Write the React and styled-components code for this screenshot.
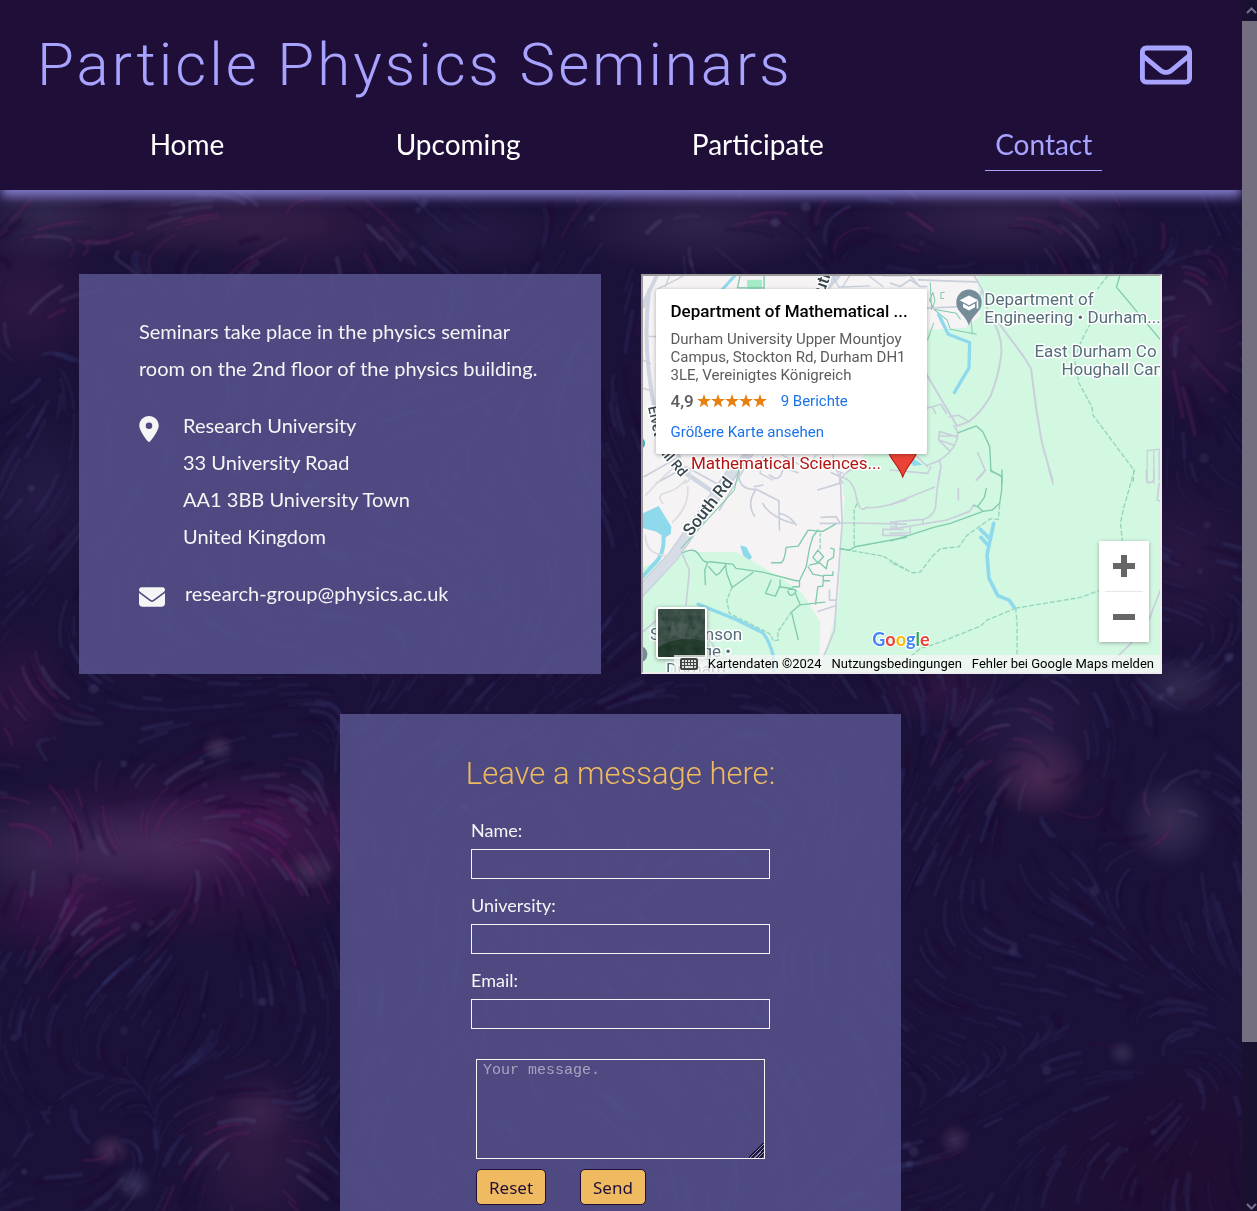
import React from "react";
import styled, { createGlobalStyle } from "styled-components";
import { FaEnvelope, FaLocationDot, FaRegEnvelope, FaKeyboard } from "react-icons/fa6";

const night = "#1f0f38";
const lilac = "#a7a3ff";
const amber = "#f0ba60";
const bodyFont = `Lato, "Open Sans", sans-serif`;
const displayFont = `Roboto, "Open Sans", sans-serif`;

const GlobalStyle = createGlobalStyle`
  *, *::before, *::after { box-sizing: border-box; }
  body { margin: 0; background: #1c1138; color: #f5f5f5; font-family: ${bodyFont}; }
  h1, h2, p, ul { margin: 0; padding: 0; }
`;

const Window = styled.div`
  display: grid;
  grid-template-columns: minmax(0, 1fr) 15px;
  height: 100vh;
  overflow: hidden;
`;

const Page = styled.div`
  position: relative;
  display: flex;
  flex-direction: column;
  min-height: 0;
  overflow: hidden;
`;

const Backdrop = styled.svg`
  position: absolute;
  inset: 0;
  width: 100%;
  height: 100%;
`;

const Header = styled.header`
  position: relative;
  z-index: 1;
  flex: none;
  height: 190px;
  padding-top: 25px;
  background: ${night};
  box-shadow: 0 8px 10px -1px #7f78c6;
`;

const TitleRow = styled.div`
  display: flex;
  align-items: center;
  justify-content: space-between;
  height: 80px;
  padding: 0 50px 0 37px;
`;

const Title = styled.h1`
  font: 300 60px/80px ${displayFont};
  letter-spacing: 3px;
  color: ${lilac};
`;

const MailLink = styled.a`
  display: flex;
  color: ${lilac};
  font-size: 52px;
`;

const NavList = styled.ul`
  display: flex;
  justify-content: space-around;
  padding: 0 64px;
  margin-top: 15px;
  list-style: none;
`;

const NavLink = styled.a`
  display: block;
  padding: 0 10px 2px;
  font-size: 28px;
  line-height: 48px;
  text-decoration: none;
  color: ${(p) => (p.$active ? lilac : "#ffffff")};
  border-bottom: 1px solid ${(p) => (p.$active ? lilac : "transparent")};
`;

const Main = styled.main`
  position: relative;
  flex: 1;
  min-height: 0;
  display: flex;
  flex-direction: column;
  align-items: center;
  gap: 40px;
  padding: 84px 80px 0 79px;
  overflow: auto;
  scrollbar-width: none;
`;

const TopRow = styled.div`
  flex: none;
  width: 100%;
  display: grid;
  grid-template-columns: 1fr 1fr;
  gap: 40px;
`;

const Card = styled.section`
  background: rgba(87, 83, 142, 0.86);
`;

const InfoCard = styled(Card)`
  display: flex;
  flex-direction: column;
  gap: 20px;
  min-height: 400px;
  padding: 39px 50px 40px 60px;
  font-size: 20px;
  line-height: 37px;
`;

const InfoRow = styled.div`
  display: flex;
`;

const RowIcon = styled.span`
  flex: none;
  display: flex;
  justify-content: center;
  width: ${(p) => p.$width}px;
  height: 26px;
  margin-top: 9px;
  margin-right: ${(p) => p.$gap}px;
  svg { flex: none; width: 26px; height: 26px; }
`;

const PlainLink = styled.a`
  color: inherit;
  text-decoration: none;
`;

const Address = styled.address`
  font-style: normal;
`;

/* ---------- map ---------- */

const MapFrame = styled.section`
  position: relative;
  min-height: 400px;
  overflow: hidden;
  border: 2px solid;
  border-color: #9a9a9a #eeeeee #eeeeee #9a9a9a;
  font-family: Roboto, sans-serif;
`;

const MapDrawing = styled.svg`
  position: absolute;
  inset: 0;
  width: 100%;
  height: 100%;
`;

const PlaceCard = styled.div`
  position: absolute;
  left: 13px;
  top: 13px;
  width: 271px;
  height: 165px;
  padding: 12px 10px 12px 15px;
  background: #ffffff;
  border-radius: 2px;
  box-shadow: 0 1px 4px rgba(0, 0, 0, 0.3);
  color: #5b5b5b;
  font-size: 15px;
  line-height: 18px;
  white-space: nowrap;
`;

const PlaceName = styled.h2`
  margin-bottom: 8px;
  font-size: 17px;
  line-height: 21px;
  font-weight: 500;
  color: #000000;
`;

const Rating = styled.div`
  display: flex;
  align-items: center;
  margin: 7px 0 12px;
  line-height: 20px;
`;

const Score = styled.span`
  font-size: 17px;
  font-weight: 500;
  margin-right: 3px;
`;

const Stars = styled.svg`
  width: 70px;
  height: 14px;
  margin-right: 14px;
  fill: #e7800f;
`;

const MapLink = styled.a`
  color: #1a73e8;
  text-decoration: none;
`;

const ZoomBox = styled.div`
  position: absolute;
  right: 11px;
  bottom: 30px;
  display: flex;
  flex-direction: column;
  width: 50px;
  padding: 0 6px;
  background: #ffffff;
  box-shadow: 0 1px 4px rgba(0, 0, 0, 0.3);
`;

const ZoomButton = styled.button`
  display: grid;
  place-items: center;
  height: 50px;
  padding: 0;
  border: 0;
  background: none;
  & + & { height: 51px; border-top: 1px solid #e6e6e6; }
`;

const SatelliteButton = styled.button`
  position: absolute;
  left: 13px;
  bottom: 13px;
  width: 51px;
  height: 52px;
  padding: 0;
  border: 2px solid #ffffff;
  border-radius: 3px;
  overflow: hidden;
  box-shadow: 0 1px 4px rgba(0, 0, 0, 0.4);
  svg { display: block; width: 100%; height: 100%; }
`;

const MapFooter = styled.footer`
  position: absolute;
  right: 0;
  bottom: 0;
  display: flex;
  align-items: center;
  gap: 10px;
  height: 17px;
  padding: 0 6px;
  background: rgba(245, 245, 245, 0.75);
  color: #000000;
  font-size: 13px;
  line-height: 17px;
  white-space: nowrap;
  svg { color: #444444; font-size: 18px; }
`;

const FooterLink = styled.a`
  color: inherit;
  text-decoration: none;
`;

/* ---------- form ---------- */

const FormCard = styled(Card)`
  flex: none;
  display: flex;
  flex-direction: column;
  align-items: center;
  width: 561px;
  max-width: 100%;
  padding: 40px 20px 60px;
`;

const FormTitle = styled.h2`
  margin-bottom: 23px;
  font: 300 31px/40px ${displayFont};
  color: ${amber};
`;

const Form = styled.form`
  display: flex;
  flex-direction: column;
  width: 299px;
`;

const Field = styled.div`
  display: flex;
  flex-direction: column;
  gap: 5px;
  margin-bottom: 13px;
`;

const Label = styled.label`
  font-size: 18px;
  line-height: 27px;
`;

const Input = styled.input`
  height: 30px;
  padding: 0 6px;
  border: 1px solid #f5f5f5;
  background: transparent;
  color: #f5f5f5;
  font: 16px ${bodyFont};
`;

const Message = styled.textarea`
  height: 100px;
  margin: 17px 5px 10px;
  padding: 2px 6px;
  border: 1px solid #f5f5f5;
  border-radius: 0;
  background: transparent;
  color: #f5f5f5;
  font: 15px/18px "Liberation Mono", monospace;
  resize: both;
  &::placeholder { color: #a8a4bf; opacity: 1; }
  &::-webkit-resizer {
    background: linear-gradient(135deg, transparent 44%,
      #1f1838 44%, #1f1838 51%, #8f8bb8 51%, #8f8bb8 56%,
      #1f1838 56%, #1f1838 64%, #8f8bb8 64%, #8f8bb8 70%,
      #1f1838 70%, #1f1838 77%, #8f8bb8 77%, #8f8bb8 83%,
      #1f1838 83%, #1f1838 90%, transparent 90%);
  }
`;

const Actions = styled.div`
  display: flex;
  gap: 34px;
  padding: 0 5px;
`;

const Button = styled.button`
  height: 36px;
  padding: 0 12px;
  border: 1px solid ${night};
  border-radius: 5px;
  background: ${amber};
  color: ${night};
  font: 17px "Noto Sans", sans-serif;
`;

/* ---------- scroll bar ---------- */

const ScrollTrack = styled.div`
  display: flex;
  flex-direction: column;
  background: #1a1030;
  color: #77728a;
  overflow: hidden;
`;

const ScrollArrow = styled.div`
  display: grid;
  place-items: center end;
  flex: none;
  height: ${(p) => p.$size}px;
`;

const ScrollThumb = styled.div`
  flex: 32;
  background: #746f80;
`;

const ScrollRest = styled.div`
  flex: 5;
`;

/* Painted-sky backdrop: soft glows plus brush strokes bending round each star. */
const glows = [
  [190, 850, 170, 75, "#7a2070", 0.4], [40, 850, 90, 50, "#5f4a78", 0.5], [160, 845, 80, 40, "#66527e", 0.5],
  [270, 825, 90, 45, "#702068", 0.35], [60, 915, 80, 35, "#661a62", 0.4], [1040, 775, 40, 36, "#7a4068", 0.7],
  [1030, 730, 60, 60, "#3c2f62", 0.5], [1170, 822, 38, 38, "#5a5074", 0.65], [255, 1150, 60, 75, "#5e3060", 0.45],
  [260, 1110, 30, 26, "#7a4f7a", 0.3], [110, 1150, 16, 14, "#6a456c", 0.7], [134, 1184, 15, 14, "#5c5a86", 0.6],
  [218, 748, 13, 12, "#6c5876", 0.6], [310, 870, 22, 16, "#6f607f", 0.5], [955, 1140, 13, 13, "#664870", 0.6],
  [1122, 1053, 12, 11, "#5c5a7a", 0.5], [190, 222, 120, 30, "#5c3a60", 0.5], [310, 225, 90, 40, "#5c3060", 0.4],
  [45, 215, 60, 40, "#4f4468", 0.6], [700, 225, 110, 38, "#4c3c66", 0.6], [1000, 220, 120, 34, "#4c3862", 0.6],
  [1190, 330, 50, 70, "#5a2b62", 0.4], [25, 300, 60, 60, "#5c2a60", 0.4], [20, 700, 40, 60, "#5c2058", 0.4],
  [1180, 685, 40, 25, "#544a70", 0.6], [940, 690, 50, 30, "#5a2058", 0.4], [1190, 1170, 130, 90, "#2a0526", 0.5],
  [1180, 560, 60, 70, "#4f2b62", 0.35], [40, 500, 50, 70, "#3f3468", 0.4], [470, 235, 80, 30, "#3b2f60", 0.4],
];

const vortices = [
  [170, 860, 1, 170], [1040, 775, -1, 90], [1170, 820, 1, 80], [255, 1150, -1, 90], [110, 1150, 1, 60],
  [40, 850, -1, 90], [300, 230, 1, 90], [700, 230, -1, 120], [1000, 240, 1, 100], [1190, 330, -1, 90],
  [40, 360, 1, 90], [560, 900, -1, 160], [1180, 1080, 1, 100],
];

function makeStrokes() {
  let seed = 71;
  const rand = () => {
    seed = (seed * 16807) % 2147483647;
    return seed / 2147483647;
  };
  const strokes = [];
  for (let i = 0; i < 2600; i++) {
    let x = rand() * 1260 - 10;
    let y = 190 + rand() * 1030;
    const warm = Math.min(1, glows.slice(0, 24).reduce((s, [gx, gy, rx, ry]) => {
      const d = ((x - gx) / rx) ** 2 + ((y - gy) / ry) ** 2;
      return s + Math.exp(-d);
    }, 0));
    const steps = 3 + Math.floor(rand() * 6);
    let d = `M${x.toFixed(1)} ${y.toFixed(1)}`;
    for (let k = 0; k < steps; k++) {
      let vx = Math.sin(y / 53 + x / 120) * 0.45;
      let vy = 0.5 + Math.cos(x / 67 + y / 140) * 0.4;
      for (const [cx, cy, spin, r] of vortices) {
        const dx = x - cx;
        const dy = y - cy;
        const dist = Math.hypot(dx, dy) + 1;
        const w = Math.exp(-(dist * dist) / (r * r)) * 1.6;
        vx += (w * (-dy * spin + dx * 0.9)) / dist;
        vy += (w * (dx * spin * 0.6 + dy * 0.9)) / dist;
      }
      const n = Math.hypot(vx, vy) || 1;
      x += (vx / n) * 6;
      y += (vy / n) * 6;
      d += `L${x.toFixed(1)} ${y.toFixed(1)}`;
    }
    const pink = rand() < warm * 0.6;
    const dark = rand() < 0.25;
    strokes.push({
      d,
      color: dark ? "#180b30" : pink ? "#622060" : warm > 0.4 ? "#544e7c" : "#363a70",
      width: 1.5 + rand() * 3,
      opacity: 0.1 + rand() * 0.24 + warm * 0.1,
    });
  }
  const specks = [];
  for (let i = 0; i < 110; i++) {
    specks.push([rand() * 1242, 200 + rand() * 1010, 2 + rand() * 3, 0.06 + rand() * 0.18]);
  }
  return { strokes, specks };
}

const sky = makeStrokes();

function Sky() {
  return (
    <Backdrop viewBox="0 0 1242 1211" preserveAspectRatio="xMidYMin slice" aria-hidden="true">
      <defs>
        {glows.map(([, , , , fill, o], i) => (
          <radialGradient key={i} id={`glow${i}`}>
            <stop offset="0" stopColor={fill} stopOpacity={o * 0.7} />
            <stop offset="0.5" stopColor={fill} stopOpacity={o * 0.4} />
            <stop offset="1" stopColor={fill} stopOpacity="0" />
          </radialGradient>
        ))}
        <filter id="brush"><feGaussianBlur stdDeviation="1.3" /></filter>
      </defs>
      <rect width="1242" height="1211" fill="#1c1138" />
      {glows.map(([cx, cy, rx, ry], i) => (
        <ellipse key={i} cx={cx} cy={cy} rx={rx * 1.25} ry={ry * 1.25} fill={`url(#glow${i})`} />
      ))}
      <g filter="url(#brush)" fill="none" strokeLinecap="round" strokeLinejoin="round">
        {sky.strokes.map((s, i) => (
          <path key={i} d={s.d} stroke={s.color} strokeWidth={s.width} opacity={s.opacity} />
        ))}
        {sky.specks.map(([cx, cy, r, o], i) => (
          <circle key={i} cx={cx} cy={cy} r={r} fill="#6a6ea6" opacity={o} />
        ))}
      </g>
    </Backdrop>
  );
}

const road = "#cfd6e1";
const lane = "#c9cfdb";
const trail = "#7fcbab";
const water = "#8fd9ed";

function CampusMap() {
  return (
    <MapDrawing viewBox="0 0 517 396" preserveAspectRatio="xMidYMid slice" role="img" aria-label="Map">
      <rect width="517" height="396" fill="#f5f3f4" />
      <g fill="#d3f8e2">
        <path d="M334 0H517V396H178L195 326 198 275 201 225 206 196 222 178 284 178V54L322 52 337 40Z" />
        <path d="M0 291 41 276H93L140 303 160 318 177 346 176 396H0Z" />
        <path d="M200 205 206 192 225 177H285V220H200Z" />
      </g>
      <path d="M104 4h15v9h-15z" fill="#a5ebc7" />

      {/* north-west quarter */}
      <g transform="translate(-7 -6) scale(.33333)" fill="none" strokeLinejoin="round" strokeLinecap="round">
        <path d="M62 18 28 90 22 110M40 60Q24 180 38 300T60 420Q66 500 130 560" stroke={road} strokeWidth="12" />
        <path d="M40 200H62M20 270 44 282M22 355 42 362M100 18 88 50M60 60 140 20" stroke={lane} strokeWidth="4" />
        <path d="M296 18 256 62" stroke={water} strokeWidth="9" />
        <path d="M312 18 304 54H384M384 20V56" stroke={trail} strokeWidth="4" />
        <path d="M600 18 560 62" stroke={road} strokeWidth="24" />
        <path d="M592 22 608 52 700 48M640 18 620 50M700 20 740 50M740 18H810" stroke={lane} strokeWidth="4" />
        <path d="M24 620 130 560M60 640 150 590 240 640M350 552 250 720" stroke={lane} strokeWidth="5" />
        <path d="M330 560 270 640" stroke={road} strokeWidth="26" />
        <path d="M380 560 372 610 410 630M440 556 500 590 560 580 620 610M590 555 600 600 620 640M540 556 520 580M470 556V580" stroke={lane} strokeWidth="4" />
        <circle cx="8" cy="520" r="19" fill="#22b5bd" />
      </g>

      {/* north-east quarter */}
      <g transform="translate(247 -6) scale(.33333)" fill="none" strokeLinejoin="round" strokeLinecap="round">
        <path d="M0 40 30 50 60 30 90 50H110M60 18 86 48M85 30 180 34 260 36M110 115 260 108 276 60 252 18M276 60 300 150" stroke={lane} strokeWidth="5" />
        <path d="M300 140Q340 200 332 260T300 380Q270 430 236 455L200 468 110 315M325 160 400 260 422 296 438 420 455 520 486 630" stroke={lane} strokeWidth="6" />
        <path d="M110 415 152 403 168 430M126 412 136 430M176 440 205 436 236 455M190 468Q214 490 190 530T112 585M148 485 198 500M148 485 145 510 190 525M145 510 180 545M148 498H200M80 560 112 590M0 600 112 610 122 590M148 570 152 590 145 630M262 548 284 600 258 630" stroke={lane} strokeWidth="5" />
        <path d="M120 38 124 120M128 68 118 90 128 112 134 92ZM130 118 170 150 180 178 258 193M130 118 198 130 210 148M240 130 246 190M130 160 112 210M152 68V86H160M152 68H162" stroke={trail} strokeWidth="3" />
        <path d="M145 134 174 193 238 218 236 294 192 368" stroke={water} strokeWidth="10" />
        <path d="M205 488 258 468 278 486 298 530 302 604 335 618V640" stroke={trail} strokeWidth="4" />
        <path d="M688 18 678 52 810 210" stroke={trail} strokeWidth="4" />
        <path d="M652 18 622 56M600 160 572 215 552 270 566 340 604 410 608 436 730 600 728 640" stroke="#94d5b9" strokeWidth="4" strokeDasharray="12 9" />
        <path d="M770 640V542L825 536M790 540V640M806 540V630M825 322Q796 335 825 350" stroke={lane} strokeWidth="4" />
        <path d="M56 574 72 568 96 584 70 588Z" fill={water} />
        <path d="M236 168C226 132 198 128 198 97A38 38 0 0 1 274 97C274 128 246 132 236 168Z" fill="#748d99" />
        <path d="M236 77 208 91 236 106 264 91Z" fill="#ffffff" />
        <path d="M218 101V112L236 122 254 112V101L236 111ZM259 94H264V116H259Z" fill="#ffffff" />
      </g>

      {/* south-west quarter */}
      <g transform="translate(-7 194) scale(.33333)" fill="none" strokeLinejoin="round" strokeLinecap="round">
        <path d="M300 -10 110 260 -20 400" stroke="#c3ccd9" strokeWidth="34" />
        <path d="M300 -10 110 260 -20 400" stroke="#d6dde6" strokeWidth="28" />
        <path d="M120 -10 230 65" stroke={road} strokeWidth="14" />
        <path d="M20 130 68 108 106 170 104 192 88 202 60 184 20 174Z" fill={water} stroke="none" />
        <path d="M82 190Q88 250 56 280L10 330" stroke={water} strokeWidth="12" />
        <path d="M28 195Q30 240 60 250L110 265M30 75Q60 40 110 -5M80 100Q60 75 90 68T150 30M110 156Q160 110 155 50M160 0Q170 30 145 40" stroke="#dcdde2" strokeWidth="5" />
        <path d="M310 0Q300 60 360 58L428 92 430 180M360 58Q330 100 355 138M380 100Q400 140 470 160M430 130Q460 135 480 165M355 50 380 45M400 15Q430 40 440 0M450 -5 485 8" stroke={lane} strokeWidth="5" />
        <path d="M308 0 295 60 135 235" stroke={trail} strokeWidth="3" />
        <path d="M545 60 610 40 612 10M612 10 618 160 600 400 595 480 562 560M555 142 600 140 612 160M610 158 810 162M552 160H612M740 178V196H810M740 178H800M586 8 620 24Q650 28 660 80T690 112Q720 118 810 90M620 20Q640 -10 680 -5M545 424 600 406M580 360V390H600" stroke={lane} strokeWidth="5" />
        <path d="M136 245 160 300 150 405" stroke={lane} strokeWidth="5" />
        <path d="M140 248Q175 230 190 256T220 275L290 282 300 295 380 306 480 332 490 332 510 290 520 235 530 200 545 180M406 278H436Q446 270 450 232L486 228 516 180 560 184 598 162M215 278 206 300 208 344M218 290 240 315 250 310 270 284M268 284 272 310 288 352 350 308M405 330 388 370 418 378 430 350 470 356M432 330V352M455 362Q460 384 475 370T458 358M490 335V350H470M478 370 492 404 566 396M466 425 486 508M468 424 492 404M538 402 545 350 560 348 562 316 590 316M516 290 530 312 560 318M520 285 550 278 570 296 575 272 592 262 594 238 584 234M530 262 545 240 562 260 545 278ZM590 315V305M562 332H580" stroke={trail} strokeWidth="4" />
        <path d="M288 352 272 390 280 430 350 465 400 490 412 512 426 510 425 485 466 425M662 102 654 120V230M612 236 740 258 810 298M552 236V190" stroke="#94d5b9" strokeWidth="4" strokeDasharray="11 8" />
        <path d="M612 236 640 240 656 230 810 202" stroke={trail} strokeWidth="4" />
        <path d="M186 402 300 448 380 488Q400 510 412 560V610" stroke={water} strokeWidth="10" />
        <path d="M312 226 330 230 348 262 340 270 322 258Z" fill={water} />
        <path d="M20 485 62 450M215 500Q240 530 260 600" stroke={lane} strokeWidth="5" />
        <circle cx="8" cy="552" r="26" fill="#748d99" />
      </g>

      {/* south-east quarter */}
      <g transform="translate(247 194) scale(.33333)" fill="none" strokeLinejoin="round" strokeLinecap="round">
        <path d="M150 0 140 60 136 110Q132 136 100 148L0 156M0 170H18V154M0 190 60 188V170M0 178 170 150 238 124 250 105M0 104 132 52M98 148V162M285 0Q275 20 258 30M204 55V90M476 0 488 42M768 0V30Q778 46 790 30V0M806 40 800 90 825 100M825 320 775 450M725 516 640 600" stroke={lane} strokeWidth="5" />
        <path d="M335 0 334 60 328 100 306 120 278 124 180 160 130 172 30 204 0 212M250 106 262 110 278 124M262 110 282 82 288 55M300 0 334 20" stroke={trail} strokeWidth="4" />
        <path d="M328 105 324 148 300 146 230 196 206 230 150 236 125 260 90 306 66 308 0 276M732 0 698 120 690 160 696 214M376 414 570 382 640 356M376 414 290 450 270 468 150 516 90 535 0 610M376 414 380 460V560" stroke="#94d5b9" strokeWidth="4" strokeDasharray="12 9" />
        <path d="M310 160 290 255 296 325 322 376 356 390 372 412M270 178 300 208M272 202 294 226" stroke={water} strokeWidth="11" />
      </g>

      <path d="M259.500 201C254 186 243 182 243 164A16.500 16.500 0 0 1 276 164C276 182 265 186 259.500 201Z" fill="#ea4335" stroke="#b31412" strokeWidth="1" />

      <g fontFamily="Roboto, sans-serif" fontSize="17" stroke="#ffffff" strokeWidth="3" paintOrder="stroke" strokeLinejoin="round">
        <g fill="#546e7a">
          <text x="341" y="29">Department of</text>
          <text x="341" y="47">Engineering • Durham...</text>
          <text x="391" y="81">East Durham Co</text>
          <text x="418" y="99">Houghall Campus</text>
          <text x="7" y="364">S</text>
          <text x="99" y="364" textAnchor="end">enson</text>
          <text x="88" y="381" textAnchor="end">College •</text>
          <text x="23" y="399">Durham</text>
        </g>
        <text x="48" y="193" fill="#b31412">Mathematical Sciences...</text>
        <g fill="#37474f" fontWeight="500">
          <text transform="translate(48 261) rotate(-52)">South Rd</text>
          <text transform="translate(181 18) rotate(-70)">uth</text>
          <text transform="translate(5 131) rotate(78)" fontSize="14">Elvet</text>
          <text transform="translate(18 178) rotate(50)" fontSize="14">ill Rd</text>
        </g>
      </g>

      <text x="229" y="370" fontFamily="Lato, sans-serif" fontSize="18" fontWeight="700" stroke="#ffffff" strokeWidth="2" paintOrder="stroke">
        <tspan fill="#4285f4">G</tspan><tspan fill="#ea4335">o</tspan><tspan fill="#fbbc04">o</tspan><tspan fill="#4285f4">g</tspan><tspan fill="#34a853">l</tspan><tspan fill="#ea4335">e</tspan>
      </text>
    </MapDrawing>
  );
}

function SatelliteThumb() {
  return (
    <svg viewBox="0 0 47 48" preserveAspectRatio="none" aria-hidden="true">
      <filter id="grain">
        <feTurbulence type="fractalNoise" baseFrequency="0.14" numOctaves="4" seed="9" />
        <feColorMatrix values="0 0.5 0 0 -0.06  0 0.5 0 0 0.02  0 0.45 0 0 -0.01  0 0 0 0 1" />
      </filter>
      <rect width="47" height="48" fill="#1d2f2a" />
      <rect width="47" height="48" filter="url(#grain)" opacity="0.35" />
      <path d="M0 38Q20 26 47 32V48H0Z" fill="#16301c" opacity="0.6" />
      <path d="M14 12 30 16 26 30 12 26Z" fill="#66736f" opacity="0.25" />
    </svg>
  );
}

const starPath = "M7 0 8.700 4.900 14 5 9.800 8.100 11.300 13.200 7 10.200 2.700 13.200 4.200 8.100 0 5 5.300 4.900Z";

const navItems = ["Home", "Upcoming", "Participate", "Contact"];
const fields = [
  ["name", "Name:", "text"],
  ["university", "University:", "text"],
  ["email", "Email:", "email"],
];

export default function App() {
  return (
    <Window>
      <GlobalStyle />
      <Page>
        <Sky />
        <Header>
          <TitleRow>
            <Title>Particle Physics Seminars</Title>
            <MailLink href="#message" aria-label="Write a message"><FaRegEnvelope /></MailLink>
          </TitleRow>
          <nav>
            <NavList>
              {navItems.map((item) => (
                <li key={item}>
                  <NavLink href={`#${item.toLowerCase()}`} $active={item === "Contact"}>{item}</NavLink>
                </li>
              ))}
            </NavList>
          </nav>
        </Header>
        <Main>
          <TopRow>
            <InfoCard>
              <p>Seminars take place in the physics seminar room on the 2nd floor of the physics building.</p>
              <InfoRow>
                <RowIcon $width={20} $gap={24}><FaLocationDot /></RowIcon>
                <Address>
                  Research University<br />33 University Road<br />AA1 3BB University Town<br />United Kingdom
                </Address>
              </InfoRow>
              <InfoRow>
                <RowIcon $width={26} $gap={20}><FaEnvelope /></RowIcon>
                <PlainLink href="mailto:research-group@physics.ac.uk">research-group@physics.ac.uk</PlainLink>
              </InfoRow>
            </InfoCard>
            <MapFrame>
              <CampusMap />
              <PlaceCard>
                <PlaceName>Department of Mathematical ...</PlaceName>
                <p>Durham University Upper Mountjoy<br />Campus, Stockton Rd, Durham DH1<br />3LE, Vereinigtes Königreich</p>
                <Rating>
                  <Score>4,9</Score>
                  <Stars viewBox="0 0 70 14" aria-hidden="true">
                    {[0, 14, 28, 42, 56].map((x) => <path key={x} d={starPath} transform={`translate(${x} 0)`} />)}
                  </Stars>
                  <MapLink href="#reviews">9 Berichte</MapLink>
                </Rating>
                <MapLink href="#map">Größere Karte ansehen</MapLink>
              </PlaceCard>
              <ZoomBox>
                <ZoomButton type="button" aria-label="Zoom in">
                  <svg width="22" height="22"><path d="M0 8h8V0h6v8h8v6h-8v8H8v-8H0z" fill="#666666" /></svg>
                </ZoomButton>
                <ZoomButton type="button" aria-label="Zoom out">
                  <svg width="22" height="22"><path d="M0 8h22v6H0z" fill="#666666" /></svg>
                </ZoomButton>
              </ZoomBox>
              <SatelliteButton type="button" aria-label="Satellite view"><SatelliteThumb /></SatelliteButton>
              <MapFooter>
                <FaKeyboard />
                <span>Kartendaten ©2024</span>
                <FooterLink href="#terms">Nutzungsbedingungen</FooterLink>
                <FooterLink href="#report">Fehler bei Google Maps melden</FooterLink>
              </MapFooter>
            </MapFrame>
          </TopRow>
          <FormCard id="message">
            <FormTitle>Leave a message here:</FormTitle>
            <Form>
              {fields.map(([id, label, type]) => (
                <Field key={id}>
                  <Label htmlFor={id}>{label}</Label>
                  <Input id={id} name={id} type={type} />
                </Field>
              ))}
              <Message aria-label="Your message" placeholder="Your message." />
              <Actions>
                <Button type="reset">Reset</Button>
                <Button type="submit">Send</Button>
              </Actions>
            </Form>
          </FormCard>
        </Main>
      </Page>
      <ScrollTrack aria-hidden="true">
        <ScrollArrow $size={21}>
          <svg width="11" height="7" fill="none" stroke="currentColor" strokeWidth="2"><path d="M1 6 5.500 1.500 10 6" /></svg>
        </ScrollArrow>
        <ScrollThumb />
        <ScrollRest />
        <ScrollArrow $size={9}>
          <svg width="11" height="7" fill="none" stroke="currentColor" strokeWidth="2"><path d="M1 1 5.500 5.500 10 1" /></svg>
        </ScrollArrow>
      </ScrollTrack>
    </Window>
  );
}
